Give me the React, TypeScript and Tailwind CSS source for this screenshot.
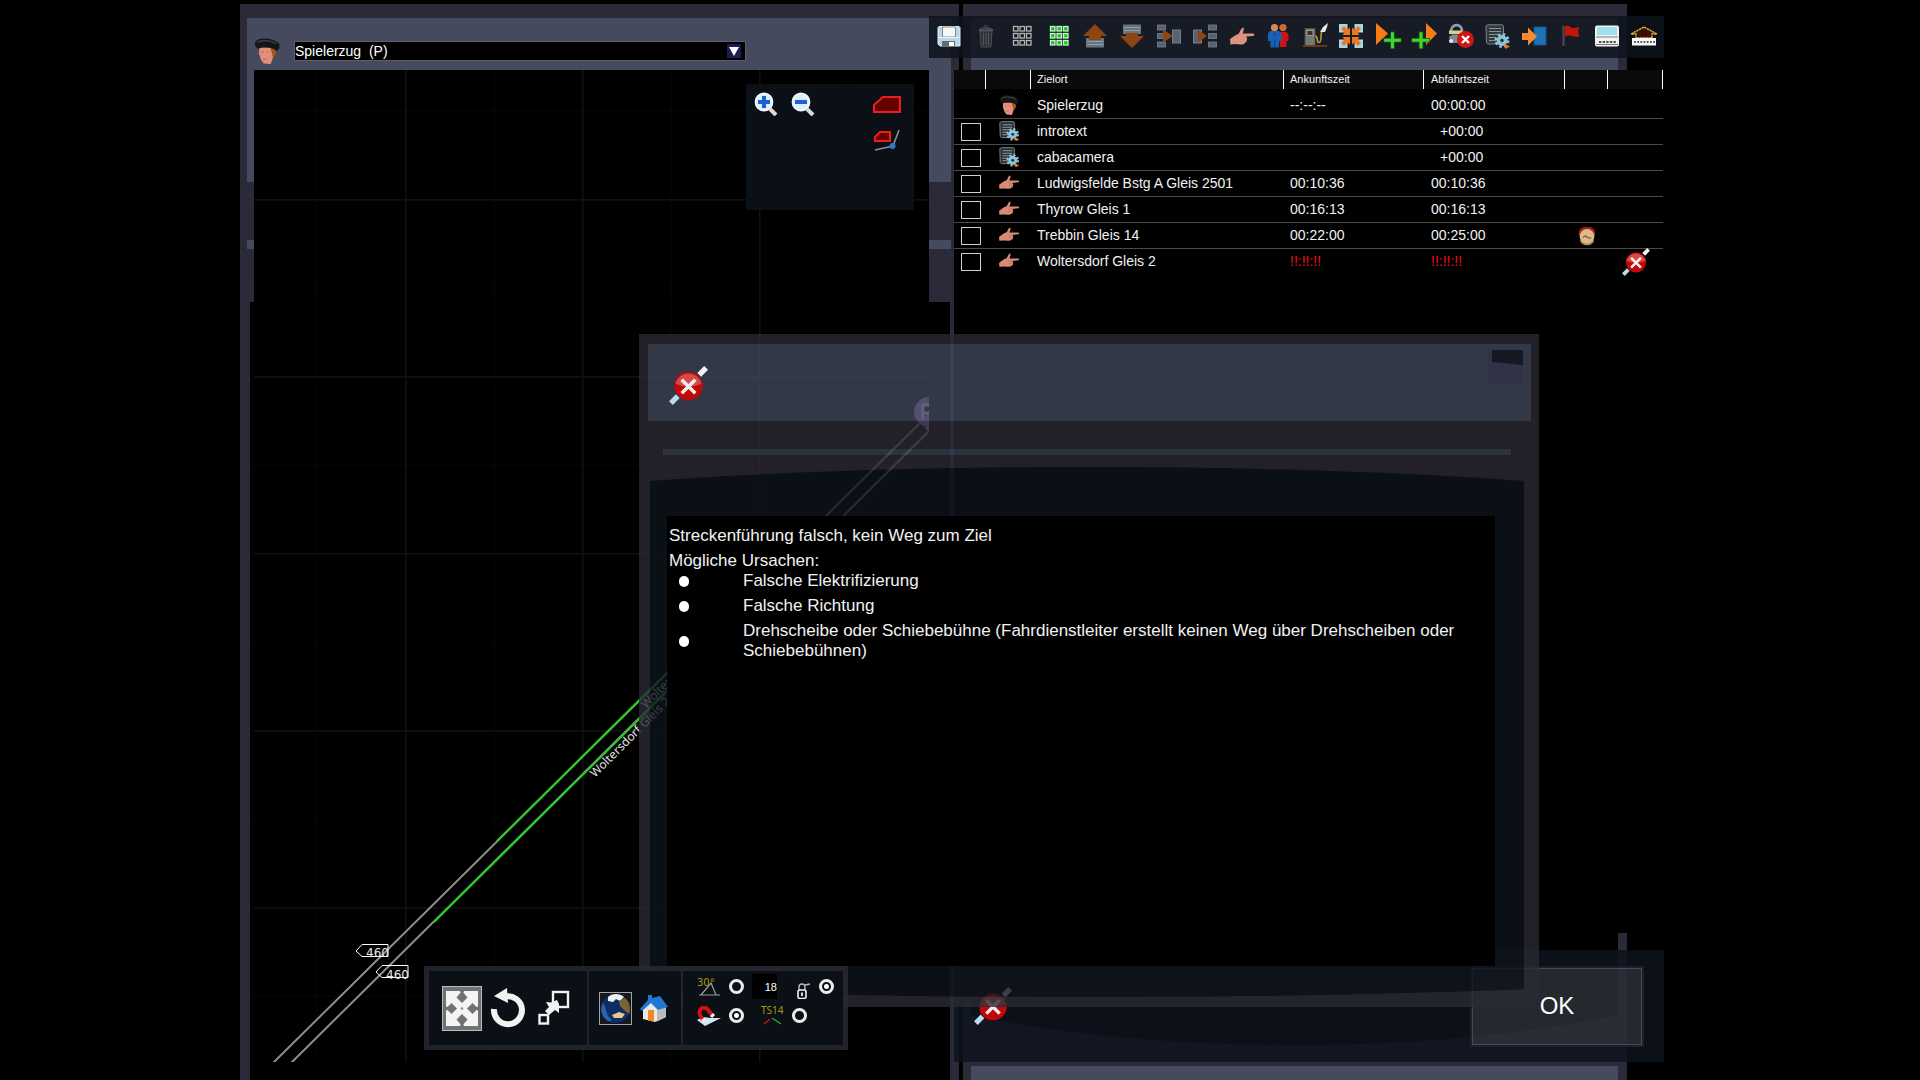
import { useState } from 'react';
import type { ReactNode } from 'react';

const Icon = ({ className, box = '0 0 24 24', children }: { className: string; box?: string; children: ReactNode }) => (
  <svg className={className} viewBox={box} fill="none" aria-hidden="true">
    {children}
  </svg>
);

const Driver = ({ className }: { className: string }) => (
  <Icon className={className}>
    <path d="M5 9 L4.5 14 L6.5 20 L9 23.5 L15.5 24 L17.5 18 L19.5 14 L19 9Z" fill="#e28f7c" />
    <path d="M15 9 L20 9 L20.5 14 L17.5 19 L16.5 14Z" fill="#a8560f" />
    <path d="M6 13h3M11.5 13h2.5M8 19.5h4" stroke="#c07466" />
    <path d="M1 4 C3 -0.5 15 -1 22 4 C25 7 23.5 11 20.5 12 C17 8.5 9 7.5 4 10 C1.5 9 0.5 6 1 4Z" fill="#141516" />
    <path d="M3 4 C8 1.5 16 2 20.5 5.5" stroke="#3a3c3e" strokeWidth="1.4" />
  </Icon>
);

const Hand = ({ className }: { className: string }) => (
  <Icon className={className}>
    <path d="M0 14.5 L5 10.5 L9.5 8.5 C10.5 6 12 2.5 13.5 3 C14.5 4.5 13 7 12.5 9 L23.5 9 C24.8 10 24 11.2 23 11.2 L16 12 C17.5 13.5 17.5 14.5 16.5 15 C17 16.5 16.5 17.5 15 17.5 C14.5 19 12.5 19 10.5 19 L5 18.5 L0.5 19Z" fill="#d98b74" />
    <path d="M11 12.2h5M11.5 14.8h4.5" stroke="#b86d59" strokeWidth=".8" />
  </Icon>
);

const Gear = ({ x, y }: { x: number; y: number }) => (
  <g transform={`translate(${x} ${y})`}>
    <circle r="6" stroke="#8cc4d8" strokeWidth="3" strokeDasharray="2.5 2.2" />
    <circle r="5.4" fill="#8cc4d8" />
    <circle r="1.7" fill="#1d2b36" />
    <path d="M2 3 L8 6 L3.5 8.5Z" fill="#f0701a" />
  </g>
);

const Script = ({ className }: { className: string }) => (
  <Icon className={className}>
    <path d="M1 2 L3 .8 H17.5 L18.5 2.5 V20 H3 L1.5 18.5Z" fill="#272d30" stroke="#8d9a9c" />
    <path d="M4 4.5h12M4 7.5h12M4 10.5h9M4 13.5h7M4 16.5h7" stroke="#8d9a9c" strokeWidth="1.2" />
    <Gear x={16.5} y={16} />
  </Icon>
);

const NoRoute = ({ className }: { className: string }) => (
  <Icon className={className} box="0 0 40 40">
    <path d="M2 38 L9 31" stroke="#b9dcf0" strokeWidth="5.5" />
    <path d="M31 9 L38 2" stroke="#f4f4f4" strokeWidth="5.5" />
    <circle cx="20" cy="20.5" r="14.5" fill="#c00808" />
    <path d="M6.5 18 a14 14 0 0 1 27 0 C27 22 13 22 6.5 18Z" fill="#d54a46" />
    <path d="M13 14 L27 28 M27 14 L13 28" stroke="#f5ecec" strokeWidth="3.6" />
  </Icon>
);

const Alarm = ({ className }: { className: string }) => (
  <Icon className={className}>
    <path d="M2.5 11 C1 3 7 0 12 1.5 C17 0 23 3 21.5 11Z" fill="#a81f1c" />
    <path d="M3.5 17 C5 25 19 25 20.5 17Z" fill="#b3875c" />
    <circle cx="12" cy="12.5" r="8.8" fill="#dcb98b" />
    <path d="M7 13.5 L10 12 L13 14 L17 14.5" stroke="#7b5a36" strokeWidth="1.6" />
  </Icon>
);

const Dots = ({ fill, stroke }: { fill: string; stroke: string }) => (
  <>
    {[2.5, 9.5, 16.5].map((y) =>
      [3.5, 10, 16.5].map((x) => (
        <rect key={`${x}-${y}`} x={x} y={y} width="4.5" height="4.5" fill={fill} stroke={stroke} strokeWidth="1.3" />
      ))
    )}
  </>
);

const Slots = ({ x }: { x: number }) => (
  <>
    {[0, 8.5, 17].map((y) => (
      <rect key={y} x={x} y={y + 1} width="8" height="5" fill="#566370" stroke="#74808c" strokeWidth=".8" />
    ))}
  </>
);

const tools: { name: string; art: ReactNode }[] = [
  {
    name: 'Speichern',
    art: (
      <>
        <path d="M1 3.5 L2 2.5 H22 L23 3.5 V22 H3 L1 20Z" fill="#b4d7ea" stroke="#e6f0f5" />
        <rect x="5.5" y="3" width="13" height="10" fill="#f7f6f0" stroke="#777" strokeWidth=".8" />
        <rect x="5" y="17" width="13" height="5.5" fill="#666b70" />
        <rect x="12" y="18" width="5" height="4" fill="#fff" />
        <path d="M2 13.5H22" stroke="#e9f6fc" />
      </>
    ),
  },
  {
    name: 'Löschen',
    art: (
      <>
        <path d="M6 7 H18 L17 23 H7Z" fill="#2e3236" stroke="#4a4f54" />
        <path d="M9.5 9v12M12 9v12M14.5 9v12" stroke="#50565b" />
        <path d="M5 6.5 C5 3 19 3 19 6.5Z" fill="#3a3f44" stroke="#565c61" />
        <path d="M10 3 C10 1 14 1 14 3" stroke="#565c61" />
      </>
    ),
  },
  { name: 'Alle abwählen', art: <Dots fill="#14171c" stroke="#b5b5b5" /> },
  { name: 'Alle auswählen', art: <Dots fill="#11c81e" stroke="#c9f5cb" /> },
  {
    name: 'Nach oben',
    art: (
      <>
        <rect x="3" y="14" width="18" height="9.5" fill="#667481" />
        <path d="M4 17.5h16M4 20.5h16" stroke="#93a0aa" />
        <path d="M12 0 L24 12 H18 V16 H6 V12 H0Z" fill="#8f4511" />
      </>
    ),
  },
  {
    name: 'Nach unten',
    art: (
      <>
        <rect x="3" y=".5" width="18" height="9.5" fill="#667481" />
        <path d="M4 3.5h16M4 6.5h16" stroke="#93a0aa" />
        <path d="M12 24 L24 12 H18 V9 H6 V12 H0Z" fill="#8f4511" />
      </>
    ),
  },
  {
    name: 'Zusammenfassen',
    art: (
      <>
        <Slots x={0.5} />
        <rect x="15.5" y="6" width="8" height="13" fill="#566370" stroke="#74808c" />
        <path d="M6 5.5 L16 12 L6 18.5Z" fill="#8f4511" />
      </>
    ),
  },
  {
    name: 'Aufteilen',
    art: (
      <>
        <rect x=".5" y="6" width="8" height="13" fill="#566370" stroke="#74808c" />
        <Slots x={15.5} />
        <path d="M5 5.5 L14 12 L5 18.5Z" fill="#8f4511" />
      </>
    ),
  },
  {
    name: 'Fahrziel',
    art: (
      <path d="M0 15 L5 11.5 L9 9.5 C10 7 12 3 13.5 3.5 C14.5 5 13 8 12.5 9.5 L23.5 9.5 C25 10.5 24 12 23 12 L16 12.5 C17.5 14 17.5 15.5 16.5 16 C17 17.5 16.5 18.5 15 18.5 C14.5 20.5 12.5 20.5 10.5 20.5 L5 20 L0.5 20.5Z" fill="#de937c" />
    ),
  },
  {
    name: 'Fahrgäste',
    art: (
      <>
        <circle cx="17" cy="3.6" r="3.6" fill="#c96a3a" />
        <path d="M13 8 H20 L22.5 10 V17 H20.5 V23 H14Z" fill="#c71616" />
        <circle cx="8.5" cy="3.6" r="3.6" fill="#d98a4e" />
        <path d="M4 7 H13 L15.5 9.5 V17 H13 V23.5 H4.5 V17 H2 V9.5Z" fill="#1762b8" />
        <path d="M8.7 15V23M8.5 8 L9 12" stroke="#0b3f85" />
      </>
    ),
  },
  {
    name: 'Tanken',
    art: (
      <>
        <rect x="2" y="4.5" width="10" height="17" fill="#767a76" stroke="#4a4c48" />
        <rect x="4" y="6.5" width="6" height="5" fill="#35322a" stroke="#b5aa90" strokeWidth=".8" />
        <path d="M0 22H24" stroke="#7a4214" strokeWidth="1.6" />
        <path d="M12 12 C16 12 13 19 16 18.5 C20 18 16 8 20 6" stroke="#b59a2c" strokeWidth="1.6" />
        <path d="M17 8 L20 3 L25 -1 L24 3 L22 8Z" fill="#e8e8e8" />
      </>
    ),
  },
  {
    name: 'Kuppeln',
    art: (
      <>
        <rect x="0" y="0" width="8.5" height="8.5" fill="#a6d4e2" />
        <rect x="15.5" y="0" width="8.5" height="8.5" fill="#a6d4e2" />
        <rect x="0" y="15.5" width="8.5" height="8.5" fill="#a6d4e2" />
        <rect x="15.5" y="15.5" width="8.5" height="8.5" fill="#a6d4e2" />
        <path d="M11 11 H3.5 L5.5 8.5 L2 5 L5 2 L8.5 5.5 L11 3.5Z M13 11 H20.5 L18.5 8.5 L22 5 L19 2 L15.5 5.5 L13 3.5Z M11 13 H3.5 L5.5 15.5 L2 19 L5 22 L8.5 18.5 L11 20.5Z M13 13 H20.5 L18.5 15.5 L22 19 L19 22 L15.5 18.5 L13 20.5Z" fill="#f07818" />
      </>
    ),
  },
  {
    name: 'Danach einfügen',
    art: (
      <>
        <path d="M0 -1 L12 9.5 L0 21Z" fill="#f57d14" />
        <path d="M16.5 7.5 V25 M7.5 16.2 H25.5" stroke="#135c10" strokeWidth="4.6" />
        <path d="M16.5 8.2 V24.3 M8.2 16.2 H24.8" stroke="#3fd42e" strokeWidth="3" />
      </>
    ),
  },
  {
    name: 'Davor einfügen',
    art: (
      <>
        <path d="M14 -1 L25 9.5 L14 21Z" fill="#f57d14" />
        <path d="M9 7.5 V25 M-.5 16.2 H18" stroke="#135c10" strokeWidth="4.6" />
        <path d="M9 8.2 V24.3 M0 16.2 H17.3" stroke="#3fd42e" strokeWidth="3" />
      </>
    ),
  },
  {
    name: 'Sperre aufheben',
    art: (
      <>
        <path d="M2 8 C2 -1 13 -1 13 7" stroke="#8b9fae" strokeWidth="2.6" />
        <path d="M0 6.5 H14 V10 H0Z" fill="#d8cf8a" />
        <path d="M0 13 L3 10.5 H12 V19 H2Z" fill="#7f8a92" />
        <circle cx="2" cy="17" r="2" fill="#e4e8ea" />
        <circle cx="16.5" cy="15.5" r="8.5" fill="#d01414" />
        <path d="M13 12 L20 19 M20 12 L13 19" stroke="#fff" strokeWidth="2.4" />
      </>
    ),
  },
  {
    name: 'Skript',
    art: (
      <>
        <path d="M1 2 L3 .8 H17.5 L18.5 2.5 V20 H3 L1.5 18.5Z" fill="#33383c" stroke="#79858a" />
        <path d="M4 4.5h12M4 7.5h12M4 10.5h9M4 13.5h7M4 16.5h7" stroke="#87949a" strokeWidth="1.1" />
        <Gear x={17} y={16.5} />
      </>
    ),
  },
  {
    name: 'Zum Portal',
    art: (
      <>
        <rect x="12" y="3" width="12" height="18" fill="#1f73b5" stroke="#12538a" />
        <path d="M0 9 H6 V3.5 L15 12.5 L6 21.5 V16 H0Z" fill="#f58a2e" />
      </>
    ),
  },
  {
    name: 'Flagge',
    art: (
      <>
        <path d="M4.5 1.5V22" stroke="#4a4a4a" strokeWidth="2.2" />
        <path d="M6 2.5 C10 0 12 5 15 4 L20.5 3 C18.5 6 19 9 20.5 12 C15 15 11 9 6 13Z" fill="#c5140c" />
      </>
    ),
  },
  {
    name: 'Waggon',
    art: (
      <>
        <rect x="0" y="1.5" width="24" height="21" rx="2" fill="#f2f2f0" />
        <rect x="2" y="3" width="20" height="8" fill="#9fe0ee" />
        <path d="M1 13H23" stroke="#777" />
        <path d="M4 18H22" stroke="#1b1b1b" strokeWidth="1.6" strokeDasharray="2.4 1.2" />
        <path d="M1 20.5H23" stroke="#555" strokeWidth=".8" />
      </>
    ),
  },
  {
    name: 'Depot',
    art: (
      <>
        <path d="M-1 10 L12 3 L25 10 H20 V14 H4 V10Z" fill="#3a0c0c" stroke="#d9c32a" strokeWidth="1.4" strokeDasharray="2.4 .6" />
        <rect x="0" y="14" width="24" height="7.5" fill="#f7f7f7" />
        <path d="M2 18H23" stroke="#222" strokeWidth="1.4" strokeDasharray="1.8 1.4" />
      </>
    ),
  },
];

type Row = {
  id: string;
  kind: 'driver' | 'script' | 'stop';
  target: string;
  arrival: string;
  departure: string;
  offset?: boolean;
  error?: boolean;
  wait?: boolean;
};

const rows: Row[] = [
  { id: 'r0', kind: 'driver', target: 'Spielerzug', arrival: '--:--:--', departure: '00:00:00' },
  { id: 'r1', kind: 'script', target: 'introtext', arrival: '', departure: '+00:00', offset: true },
  { id: 'r2', kind: 'script', target: 'cabacamera', arrival: '', departure: '+00:00', offset: true },
  { id: 'r3', kind: 'stop', target: 'Ludwigsfelde Bstg A Gleis 2501', arrival: '00:10:36', departure: '00:10:36' },
  { id: 'r4', kind: 'stop', target: 'Thyrow Gleis 1', arrival: '00:16:13', departure: '00:16:13' },
  { id: 'r5', kind: 'stop', target: 'Trebbin Gleis 14', arrival: '00:22:00', departure: '00:25:00', wait: true },
  { id: 'r6', kind: 'stop', target: 'Woltersdorf Gleis 2', arrival: '!!:!!:!!', departure: '!!:!!:!!', error: true },
];

function TrackMap() {
  return (
    <svg className="block h-full w-full" role="img" aria-label="Gleisplan">
      <defs>
        <pattern id="grid" x="151" y="129" width="177" height="177" patternUnits="userSpaceOnUse">
          <path d="M89 0V177M0 89H177" stroke="#060606" />
          <path d="M.5 0V177M0 .5H177" stroke="#111" strokeWidth="2" />
        </pattern>
      </defs>
      <rect width="100%" height="100%" fill="url(#grid)" />
      <g transform="translate(-254 -70)" strokeWidth="2">
        <path d="M273 1063 L919 424 M291 1063 L928 432" stroke="#8f8f8f" />
        <path d="M497 841 L700 640 M434 922 L718 641" stroke="#22cf16" />
        <circle cx="929" cy="412" r="15" fill="#a76fd0" />
        <path d="M924 427 H934 L929 433Z" fill="#a76fd0" />
        <path d="M923 420 V405 H932 M923 413 H932" stroke="#e2d4f2" strokeWidth="3" />
        <path d="M356 951 L362 944.5 H388 V956.5 H362Z M376 972 L382 965.5 H408 V977.5 H382Z" stroke="#fff" strokeWidth="1" fill="none" />
      </g>
      <g transform="translate(-254 -70)" fill="#e8e8e8" className="font-['DejaVu_Sans',sans-serif] text-[12px]">
        <text x="366" y="957">460</text>
        <text x="386" y="979">460</text>
      </g>
      <g transform="translate(-254 -70)" fill="#e4e4e4" className="font-['Noto_Sans',sans-serif] text-[12px]">
        <text transform="translate(595 778) rotate(-45)">Woltersdorf Gleis 2</text>
        <text transform="translate(646 709) rotate(-45)">Woltersdorf Gleis 1</text>
      </g>
    </svg>
  );
}

function MapWindow() {
  const [train, setTrain] = useState('p');

  return (
    <section className="relative flex flex-col">
      {/* Fensterrahmen */}
      <div className="absolute inset-0 flex flex-col bg-[#2a2a38] pt-[14px]">
        <div className="ml-[7px] mr-2 h-[164px] bg-[#454a5e]" />
        <div className="ml-[7px] mr-2 mt-[58px] h-[9px] bg-[#454a5e]" />
        <div className="ml-[10px] mr-[9px] mt-[53px] flex-1 bg-black" />
      </div>

      <div className="relative flex h-[66px] items-center gap-[14px] pl-[14px] pt-7">
        <Driver className="h-[26px] w-[26px]" />
        <div className="relative w-[452px]">
          <select
            aria-label="Zug"
            value={train}
            onChange={(e) => setTrain(e.target.value)}
            className="block h-5 w-full appearance-none border border-[#5d6068] bg-black px-0 text-[14px] leading-[18px] text-white"
          >
            <option value="p">Spielerzug&nbsp;&nbsp;(P)</option>
          </select>
          <span className="pointer-events-none absolute right-[5px] top-[3px] flex h-[14px] w-[14px] items-center justify-center bg-[#1d1d52]">
            <svg className="h-[9px] w-[10px]" viewBox="0 0 10 9"><path d="M0 0H10L5 9Z" fill="#fff" /></svg>
          </span>
        </div>
      </div>

      <div className="relative mb-[18px] ml-[14px] mr-[30px] min-h-0 flex-1 bg-black">
        <TrackMap />
        <div className="absolute right-[15px] top-[14px] flex h-[126px] w-[168px] justify-between bg-[#0b0f16] px-2 pt-2">
          <div className="flex h-6 gap-[13px]">
            {['Vergrößern', 'Verkleinern'].map((name, i) => (
              <button key={name} type="button" aria-label={name} className="h-6 w-6">
                <Icon className="h-6 w-6">
                  <path d="M16 17 L22 23" stroke="#d8dadb" strokeWidth="4" />
                  <circle cx="10" cy="10" r="8.6" fill="#dbeefb" stroke="#f7fafc" strokeWidth="1.6" />
                  <path d={i === 0 ? 'M10 4V16M4 10H16' : 'M4 10H16'} stroke="#1c63d0" strokeWidth="4" />
                </Icon>
              </button>
            ))}
          </div>
          <div className="flex flex-col gap-[13px] pr-[5px]">
            <button type="button" aria-label="Lok" className="h-6 w-7">
              <Icon className="h-6 w-7" box="0 0 28 24">
                <path d="M1 13 L10 5 H27 V20 H1Z" fill="#640000" stroke="#f01c1c" strokeWidth="2" />
              </Icon>
            </button>
            <button type="button" aria-label="Lok an Weiche" className="h-6 w-7">
              <Icon className="h-6 w-7" box="0 0 28 24">
                <path d="M2 8 L7 3 H17 V12 H2Z" fill="#640000" stroke="#f01c1c" strokeWidth="2" />
                <path d="M2 21 L20 17 L26 1" stroke="#8a8f93" strokeWidth="1.6" />
                <circle cx="19.5" cy="17" r="3" fill="#3475c9" />
              </Icon>
            </button>
          </div>
        </div>
      </div>
    </section>
  );
}

function Timetable() {
  const head = 'border-r border-white p-0 pb-px text-left font-normal';

  return (
    <table className="w-[709px] max-w-full table-fixed border-separate border-spacing-0 text-[14px] leading-4 text-[#f2f2f2]">
      <colgroup>
        <col className="w-8" />
        <col className="w-[45px]" />
        <col className="w-[253px]" />
        <col className="w-[140px]" />
        <col className="w-[141px]" />
        <col className="w-[43px]" />
        <col className="w-[55px]" />
      </colgroup>
      <thead className="bg-[#0a0a0a] text-[11px]">
        <tr className="h-[19px]">
          <th className={head} />
          <th className={head} />
          <th className={`${head} pl-[6px]`}>Zielort</th>
          <th className={`${head} pl-[6px]`}>Ankunftszeit</th>
          <th className={`${head} pl-[7px]`}>Abfahrtszeit</th>
          <th className={head} />
          <th className={head} />
        </tr>
      </thead>
      <tbody>
        {rows.map((row, i) => {
          const line = i < rows.length - 1 ? 'border-b border-[#4a4a4a]' : '';
          const pad = i === 0 ? 'pt-[3px]' : 'pb-[2px]';
          const time = row.error ? 'text-[#f01010]' : '';
          return (
            <tr key={row.id} className={i === 0 ? 'h-[30px]' : 'h-[26px]'}>
              <td className={`p-0 pl-[7px] ${line}`}>
                {row.kind !== 'driver' && (
                  <input id={row.id} type="checkbox" className="block h-[18px] w-5 appearance-none border border-[#d0d0d0] bg-black checked:bg-[#11c81e]" />
                )}
              </td>
              <td className={`p-0 ${pad} ${line}`}>
                {row.kind === 'driver' && <Driver className="mx-auto h-5 w-5" />}
                {row.kind === 'script' && <Script className="mx-auto h-5 w-5" />}
                {row.kind === 'stop' && <Hand className="mx-auto h-5 w-5" />}
              </td>
              <td className={`p-0 pl-[6px] ${pad} ${line}`}>
                {row.kind === 'driver' ? row.target : <label htmlFor={row.id}>{row.target}</label>}
              </td>
              <td className={`p-0 pl-[6px] ${pad} ${line} ${time}`}>{row.arrival}</td>
              <td className={`p-0 ${row.offset ? 'pl-4' : 'pl-[7px]'} ${pad} ${line} ${time}`}>{row.departure}</td>
              <td className={`p-0 ${line}`}>{row.wait && <Alarm className="ml-3 h-5 w-5" />}</td>
              <td className={`p-0 ${line}`}>{row.error && <NoRoute className="-my-1 ml-[14px] h-7 w-7" />}</td>
            </tr>
          );
        })}
      </tbody>
    </table>
  );
}

function ScheduleWindow() {
  return (
    <section className="relative flex flex-col pt-3">
      {/* Fensterrahmen */}
      <div className="absolute inset-y-0 left-0 right-[37px] flex flex-col bg-[#2a2a38] pt-[14px]">
        <div className="ml-2 mr-[9px] h-[164px] bg-[#454a5e]" />
        <div className="relative mb-[21px] ml-2 mr-[9px] mt-[58px] flex-1 overflow-hidden">
          <div className="absolute -inset-x-1/4 inset-y-0 rounded-b-[50%_118px] bg-black" />
        </div>
        <div className="ml-2 mr-[9px] h-[14px] bg-[#454a5e]" />
      </div>

      <div className="relative -ml-[34px] flex h-[42px] items-center bg-[#0e131c]/85 px-[2px] pb-[2px]">
        {tools.map((tool) => (
          <button key={tool.name} type="button" aria-label={tool.name} className="flex h-full flex-1 items-center justify-center">
            <Icon className="h-6 w-6 overflow-visible">{tool.art}</Icon>
          </button>
        ))}
      </div>

      <div className="relative -ml-[9px] mt-3 min-h-0 flex-1 bg-black">
        <Timetable />
      </div>

      <div className="relative -ml-[9px] mb-[18px] mt-[17px] flex h-28 items-center justify-between bg-[#0e131c]/85 px-5">
        <NoRoute className="h-[38px] w-[38px]" />
        <button type="button" className="h-[81px] w-[174px] border-2 border-[#1b202b] bg-white/10 text-[24px] text-white outline-1 -outline-offset-3 outline-[#454a58]">
          OK
        </button>
      </div>
    </section>
  );
}

function ErrorDialog() {
  const causes = [
    'Falsche Elektrifizierung',
    'Falsche Richtung',
    'Drehscheibe oder Schiebebühne (Fahrdienstleiter erstellt keinen Weg über Drehscheiben oder Schiebebühnen)',
  ];

  return (
    <div role="dialog" aria-labelledby="error-title" className="absolute bottom-[73px] left-[639px] right-[381px] top-[334px] flex flex-col">
      {/* durchscheinender Hintergrund */}
      <div className="absolute inset-0 flex flex-col bg-[#2b2a34] pb-[10px] pt-[10px] opacity-80">
        <div className="ml-[9px] mr-2 h-[77px] bg-[#404759]" />
        <div className="ml-6 mr-7 mt-7 h-[6px] bg-[#36404f]" />
        <div className="relative ml-[11px] mr-[15px] mt-3 flex-1 overflow-hidden">
          <div className="absolute -inset-x-1/4 inset-y-0 rounded-b-[50%_31px] rounded-t-[50%_55px] bg-[#0e131c]" />
        </div>
      </div>

      <div className="relative flex h-[182px] items-start justify-between pl-[30px] pr-4">
        <NoRoute className="mt-8 h-[39px] w-[39px]" />
        <Icon className="mt-4 h-[35px] w-[35px]" box="0 0 35 35">
          <path d="M0 0H35V35H0Z" fill="#313245" />
          <path d="M4 0H35V15L4 12Z" fill="#141924" />
        </Icon>
      </div>

      <div className="relative mb-[41px] ml-7 mr-11 min-h-0 flex-1 bg-black pl-[2px] pt-[10px] text-[17px] leading-5 text-[#f2f2f2]">
        <h2 id="error-title">Streckenführung falsch, kein Weg zum Ziel</h2>
        <p className="mt-[5px]">Mögliche Ursachen:</p>
        <ul className="flex flex-col gap-[5px] pl-[10px] pr-5">
          {causes.map((cause) => (
            <li key={cause} className="flex items-center gap-[54px]">
              <span className="h-[11px] w-[10px] shrink-0 rounded-full bg-white" />
              <span>{cause}</span>
            </li>
          ))}
        </ul>
      </div>
    </div>
  );
}

const radio =
  "h-[15px] w-[15px] shrink-0 appearance-none rounded-full border-3 border-[#ececec] bg-[#0b0f16] checked:bg-[radial-gradient(circle,#fff_0_2px,#0b0f16_3px)]";

function EditBar() {
  return (
    <div className="absolute bottom-[30px] left-[424px] flex h-[84px] gap-[2px] border-5 border-[#2b2a34]/80 bg-[#2b2a34]/80 bg-clip-padding">
      <div className="flex w-[158px] items-center gap-2 bg-[#0b0f16] pl-[13px]">
        <button type="button" aria-label="Verschieben" className="h-[45px] w-10">
          <Icon className="h-[45px] w-10" box="0 0 40 45">
            <rect x=".5" y=".5" width="39" height="44" fill="#6f7376" stroke="#b9bcbe" />
            <path d="M4 5H36V40H4Z" fill="#f4f4f4" />
            <path d="M20 5 L25.5 11.5 L20 17 L14.5 11.5Z M20 28 L25.5 33.5 L20 40 L14.5 33.5Z M4 22.5 L9.5 17 L15 22.5 L9.5 28Z M36 22.5 L30.5 17 L25 22.5 L30.5 28Z" fill="#6f7376" />
            <path d="M17 3.5H23L20 9Z M17 41.5H23L20 36Z M2.5 19.5V25.5L8 22.5Z M37.5 19.5V25.5L32 22.5Z" fill="#6f7376" />
            <circle cx="20" cy="22.5" r="1.3" fill="#888" />
          </Icon>
        </button>
        <button type="button" aria-label="Drehen" className="h-10 w-9">
          <Icon className="h-10 w-9" box="0 0 36 40">
            <path d="M15 8.5 A14 14 0 1 1 4 21" stroke="#f2f2f2" strokeWidth="6" />
            <path d="M17 0 L4 8 L18 15Z" fill="#f2f2f2" />
          </Icon>
        </button>
        <button type="button" aria-label="Skalieren" className="h-9 w-9">
          <Icon className="h-9 w-9" box="0 0 36 36">
            <rect x="19" y="2" width="15" height="15" stroke="#f2f2f2" strokeWidth="2.4" />
            <rect x="5.5" y="25" width="8.5" height="8.5" stroke="#f2f2f2" strokeWidth="2.4" />
            <path d="M12 12 L17 12.5 L23 10 L25 14 L25 23 L21 20 L15 25 L11 21 L15 17Z" fill="#f2f2f2" />
          </Icon>
        </button>
      </div>

      <div className="flex w-[92px] items-center gap-2 bg-[#0b0f16] pl-[10px]">
        <button type="button" aria-label="Weltkarte" className="h-[33px] w-[33px]">
          <Icon className="h-[33px] w-[33px]" box="0 0 33 33">
            <rect x=".5" y=".5" width="32" height="32" fill="#16181c" stroke="#a0a3a6" />
            <circle cx="16.5" cy="16.5" r="14.5" fill="#0e2c66" />
            <path d="M4 11 C8 16 6 23 13 28 L10 29.5 C3 26 0 18 4 11Z" fill="#2b62b4" />
            <path d="M9 5 C13 1 21 1 25 5 L21 9 L17 7 L14 10 L9 9Z" fill="#eef2f4" />
            <path d="M20 9 L26 6 C31 10 32 17 30 22 L26 19 L21 14Z" fill="#7c6332" />
            <path d="M13 23 L20 20 L26 22 L23 26 L15 26Z" fill="#e6c98a" />
          </Icon>
        </button>
        <button type="button" aria-label="Startseite" className="h-7 w-7">
          <Icon className="h-7 w-7" box="0 0 28 28">
            <path d="M3 13 L11 6 L26 12 V23 L15 28 L3 25Z" fill="#e9e9e7" />
            <path d="M17 16 L26 13 V23 L17 27.5Z" fill="#bcbcba" />
            <path d="M0 15 L8 6 V1 H12 V4 L20 2 L28 13 L18 16 L11 9 L2 17Z" fill="#1f78d2" />
            <path d="M8 16 H14 V27.5 L8 26.5Z" fill="#f08a24" />
          </Icon>
        </button>
      </div>

      <div className="flex w-40 flex-col gap-1 bg-[#0b0f16] pl-[14px] pt-[3px]">
        <div className="flex h-[25px] items-center">
          <label htmlFor="angle">
            <svg className="h-5 w-6" viewBox="0 0 24 20" fill="none">
              <path d="M2 18H23M4 18L14 6L19 18" stroke="#9a9a9a" strokeWidth="1.2" />
              <text x="0" y="9" fill="#a89a10" className="font-['DejaVu_Sans',sans-serif] text-[10px]">30°</text>
            </svg>
          </label>
          <input id="angle" type="radio" name="angle" className={`${radio} ml-2`} />
          <input aria-label="Wert" defaultValue="18" className="ml-2 h-[25px] w-[25px] bg-black p-0 text-right text-[11px] text-white" />
          <label htmlFor="lock" className="ml-5 pt-2">
            <svg className="h-4 w-[14px]" viewBox="0 0 14 16" fill="none">
              <path d="M2 8V4C2 0 8 0 8 4V8M8 2L13 1" stroke="#b8b8b8" strokeWidth="1.4" />
              <rect x="1" y="7" width="8" height="8.5" rx="2" fill="#111" stroke="#f4f4f4" strokeWidth="1.6" />
              <path d="M5 9.5V13" stroke="#f4f4f4" strokeWidth="1.8" />
            </svg>
          </label>
          <input id="lock" type="radio" name="lock" defaultChecked className={`${radio} ml-2`} />
        </div>
        <div className="flex h-[25px] items-center">
          <label htmlFor="snap">
            <svg className="h-5 w-6" viewBox="0 0 24 20" fill="none">
              <path d="M0 14 L6 11 L14 12 L24 12 L8 20Z" fill="#d5e6f0" />
              <path d="M6 14 L3 9 C1 3 7 -1 11 4 L15 9" stroke="#d01212" strokeWidth="4" />
              <path d="M5 15 L8 13 M14 11 L17 8" stroke="#f0f0f0" strokeWidth="3" />
            </svg>
          </label>
          <input id="snap" type="radio" name="snap" defaultChecked className={`${radio} ml-2`} />
          <label htmlFor="ts14" className="ml-4">
            <svg className="h-[22px] w-6 overflow-visible" viewBox="0 0 24 22" fill="none">
              <text x="1" y="9" fill="#a89a10" className="font-['Noto_Sans',sans-serif] text-[10px]">TS14</text>
              <path d="M4 19 L10 14" stroke="#c01616" strokeWidth="1.5" />
              <path d="M12 13 L21 19" stroke="#17b02c" strokeWidth="1.5" />
            </svg>
          </label>
          <input id="ts14" type="radio" name="ts14" className={`${radio} ml-2`} />
        </div>
      </div>
    </div>
  );
}

export default function App() {
  return (
    <div className="relative h-screen overflow-hidden bg-black font-['Liberation_Sans',Arial,sans-serif]">
      <main className="grid h-full grid-cols-[719fr_701fr] gap-1 pl-60 pr-64 pt-1">
        <MapWindow />
        <ScheduleWindow />
      </main>
      <ErrorDialog />
      <EditBar />
    </div>
  );
}
